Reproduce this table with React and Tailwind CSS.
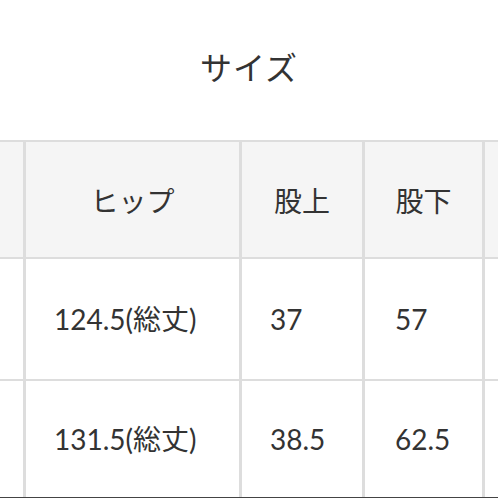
export default function App() {
  const font = { };
  const ff = "font-['Lato','Noto_Sans_CJK_JP',sans-serif]";
  const rows = [
    ["124.5(総丈)", "37", "57"],
    ["131.5(総丈)", "38.5", "62.5"],
  ];
  return (
    <div className={`w-[498px] h-[498px] overflow-hidden bg-white text-[#333] ${ff}`}>
      <div className="h-[140px] flex justify-center pt-[50px]">
        <div className="text-[32px] leading-[32px] tracking-[1px] font-['Noto_Sans_CJK_JP',sans-serif]">サイズ</div>
      </div>
      <div className="border-t-2 border-[#dddddd]">
        <div className="flex h-[117px] bg-[#f5f5f5] border-b-2 border-[#dddddd] text-[28px]">
          <div className="w-[26px] shrink-0 border-r-[3px] border-[#dddddd]" />
          <div className="w-[216px] shrink-0 border-r-[3px] border-[#dddddd] flex items-center justify-center font-['Noto_Sans_CJK_JP',sans-serif]">ヒップ</div>
          <div className="w-[123px] shrink-0 border-r-[3px] border-[#dddddd] flex items-center justify-center font-['Noto_Sans_CJK_JP',sans-serif]">股上</div>
          <div className="w-[120px] shrink-0 border-r-[3px] border-[#dddddd] flex items-center justify-center font-['Noto_Sans_CJK_JP',sans-serif]">股下</div>
          <div className="flex-1" />
        </div>
        {rows.map((r, i) => (
          <div
            key={i}
            className={`flex text-[28px] ${i === 0 ? "h-[122px] border-b-2 border-[#dddddd]" : "h-[117px] border-b border-[#444]"}`}
          >
            <div className="w-[26px] shrink-0 border-r-[3px] border-[#dddddd]" />
            <div className="w-[216px] shrink-0 border-r-[3px] border-[#dddddd] flex items-center pl-[28px]">{r[0]}</div>
            <div className="w-[123px] shrink-0 border-r-[3px] border-[#dddddd] flex items-center pl-[28px]">{r[1]}</div>
            <div className="w-[120px] shrink-0 border-r-[3px] border-[#dddddd] flex items-center pl-[30px]">{r[2]}</div>
            <div className="flex-1" />
          </div>
        ))}
      </div>
    </div>
  );
}
